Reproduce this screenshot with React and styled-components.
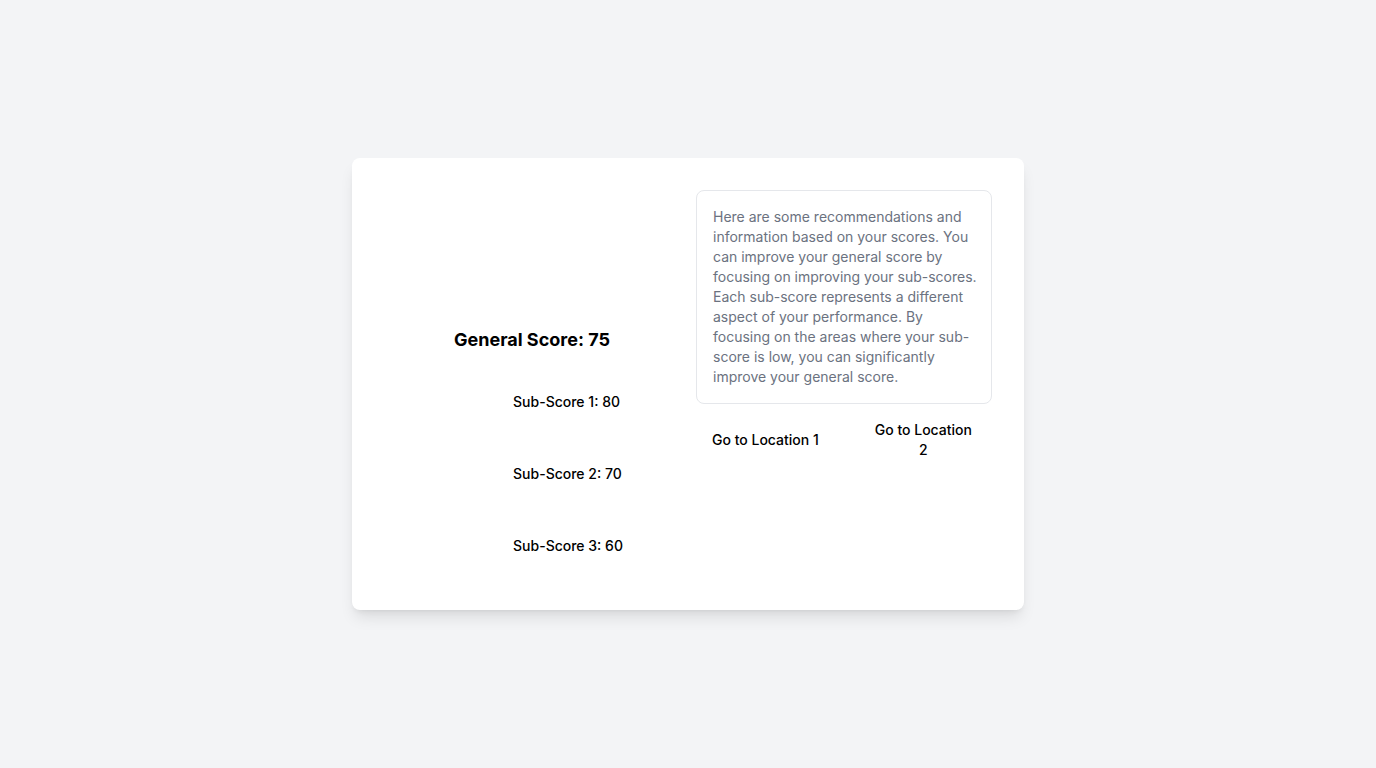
import React from "react";
import styled, { createGlobalStyle } from "styled-components";

const GlobalStyle = createGlobalStyle`
  html, body {
    margin: 0;
    padding: 0;
    background: #f3f4f6;
    font-family: Inter, "Noto Sans", sans-serif;
    color: #000;
  }
  * { box-sizing: border-box; }
`;

const Page = styled.div`
  min-height: 768px;
  display: flex;
  align-items: center;
  justify-content: center;
`;

const Card = styled.div`
  width: 672px;
  padding: 32px;
  background: #fff;
  border-radius: 8px;
  box-shadow: 0 10px 15px -3px rgba(0, 0, 0, 0.1), 0 4px 6px -4px rgba(0, 0, 0, 0.1);
  display: grid;
  grid-template-columns: 1fr 1fr;
  gap: 16px;
`;

const ScoreColumn = styled.div`
  display: flex;
  flex-direction: column;
  align-items: center;
`;

// empty slots where the score charts would sit
const ChartSlot = styled.div`
  width: ${({ $size }) => $size}px;
  height: ${({ $size }) => $size}px;
  flex-shrink: 0;
`;

const GeneralTitle = styled.h2`
  margin: 8px 0 16px;
  font-size: 18px;
  line-height: 28px;
  font-weight: 700;
`;

const SubList = styled.div`
  display: flex;
  flex-direction: column;
  gap: 8px;
`;

const SubRow = styled.div`
  display: flex;
  align-items: center;
  gap: 8px;
`;

const SubLabel = styled.span`
  font-size: 14px;
  line-height: 20px;
  font-weight: 500;
`;

const InfoColumn = styled.div`
  display: flex;
  flex-direction: column;
`;

const InfoBox = styled.div`
  padding: 16px 14px 16px 16px;
  border: 1px solid #e5e7eb;
  border-radius: 8px;
  font-size: 14px;
  line-height: 20px;
  color: #6b7280;
`;

const Actions = styled.div`
  display: flex;
  justify-content: space-between;
  gap: 20px;
  margin-top: 8px;
`;

const LinkButton = styled.button`
  padding: 8px 16px;
  border: none;
  background: transparent;
  font-family: inherit;
  font-size: 14px;
  line-height: 20px;
  font-weight: 500;
  color: #000;
  text-align: center;
  cursor: pointer;
  flex-shrink: ${({ $fixed }) => ($fixed ? 0 : 1)};
`;

const subScores = [
  { name: "Sub-Score 1", value: 80 },
  { name: "Sub-Score 2", value: 70 },
  { name: "Sub-Score 3", value: 60 },
];

export default function App() {
  return (
    <>
      <GlobalStyle />
      <Page>
        <Card>
          <ScoreColumn>
            <ChartSlot $size={128} />
            <GeneralTitle>General Score: 75</GeneralTitle>
            <SubList>
              {subScores.map((s) => (
                <SubRow key={s.name}>
                  <ChartSlot $size={64} />
                  <SubLabel>
                    {s.name}: {s.value}
                  </SubLabel>
                </SubRow>
              ))}
            </SubList>
          </ScoreColumn>
          <InfoColumn>
            <InfoBox>
              Here are some recommendations and information based on your
              scores. You can improve your general score by focusing on
              improving your sub-scores. Each sub-score represents a different
              aspect of your performance. By focusing on the areas where your
              sub-score is low, you can significantly improve your general
              score.
            </InfoBox>
            <Actions>
              <LinkButton $fixed>Go to Location 1</LinkButton>
              <LinkButton>Go to Location 2</LinkButton>
            </Actions>
          </InfoColumn>
        </Card>
      </Page>
    </>
  );
}
